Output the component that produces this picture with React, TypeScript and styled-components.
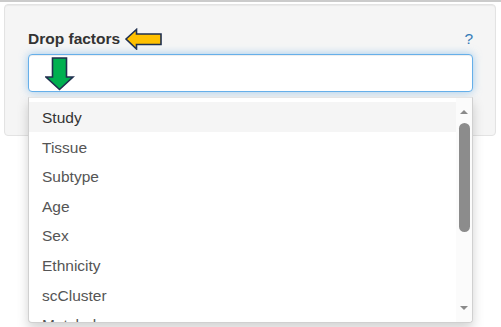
import React from "react";
import styled, { createGlobalStyle } from "styled-components";

const Global = createGlobalStyle`
  html, body { margin: 0; padding: 0; background: #fff; }
  body { font-family: "Liberation Sans", Arial, sans-serif; font-size: 15.5px; color: #333; }
  * { box-sizing: border-box; }
`;

const Page = styled.div`
  width: 501px;
  height: 327px;
  overflow: hidden;
  border-top: 2px solid #cbcbcb;
  padding: 2px 5px 0 4px;
`;

const Well = styled.div`
  background: #f5f5f5;
  border: 1px solid #e3e3e3;
  border-radius: 4px;
  box-shadow: inset 0 1px 1px rgba(0, 0, 0, 0.05);
  padding: 24px 22px 23px 23px;
`;

const LabelRow = styled.div`
  display: flex;
  align-items: center;
  height: 20px;
  margin-bottom: 5px;
`;

const Label = styled.label`
  font-weight: bold;
  font-size: 15.5px;
  line-height: 20px;
  color: #333;
`;

const Help = styled.span`
  margin-left: auto;
  color: #337ab7;
  font-size: 15.5px;
  line-height: 20px;
`;

const FieldWrap = styled.div`
  position: relative;
  margin-bottom: 20px;
`;

const Control = styled.div`
  height: 38px;
  border: 1px solid #66afe9;
  border-radius: 4px;
  background: #fff;
  box-shadow: inset 0 1px 1px rgba(0, 0, 0, 0.075), 0 0 8px rgba(102, 175, 233, 0.6);
  display: flex;
  align-items: flex-start;
  padding: 2px 16px;
`;

const Dropdown = styled.div`
  position: absolute;
  top: 43px;
  left: 0;
  right: 0;
  height: 226px;
  background: #fff;
  border: 1px solid #d0d0d0;
  border-top-color: #e5e5e5;
  border-radius: 0 0 4px 4px;
  box-shadow: 0 6px 12px rgba(0, 0, 0, 0.175);
  display: flex;
  overflow: hidden;
  z-index: 10;
`;

const Options = styled.div`
  flex: 1;
  padding-top: 4px;
  overflow: hidden;
`;

const Option = styled.div<{ $active?: boolean }>`
  height: 29.6px;
  line-height: 31px;
  padding: 0 13px;
  font-size: 15.5px;
  color: ${(p) => (p.$active ? "#333" : "#555")};
  background: ${(p) => (p.$active ? "#f5f5f5" : "transparent")};
  white-space: nowrap;
`;

const ScrollBar = styled.div`
  width: 16px;
  background: #fbfbfb;
  display: flex;
  flex-direction: column;
  align-items: center;
  padding-top: 12px;
`;

const Thumb = styled.div`
  width: 11px;
  height: 109px;
  margin-top: 9px;
  border-radius: 6px;
  background: #8c8c8c;
`;

const Spacer = styled.div`
  flex: 1;
`;

const Tri = styled.div<{ $down?: boolean }>`
  width: 0;
  height: 0;
  border-left: 4px solid transparent;
  border-right: 4px solid transparent;
  ${(p) => (p.$down ? "border-top: 4px solid #8a8a8a;" : "border-bottom: 4px solid #8a8a8a;")}
  margin-bottom: ${(p) => (p.$down ? "12px" : "0")};
`;

const ArrowSvg = styled.svg`
  display: block;
  flex: none;
`;

const LeftArrow = () => (
  <ArrowSvg width="40" height="22" viewBox="0 0 40 22" style={{ marginLeft: 4 }}>
    <polygon
      points="2,11 12.5,1.5 12.5,6 37,6 37,16.5 12.5,16.5 12.5,21"
      fill="#ffc000"
      stroke="#1f2f4f"
      strokeWidth="1.6"
      strokeLinejoin="miter"
    />
  </ArrowSvg>
);

const DownArrow = () => (
  <ArrowSvg width="30" height="34" viewBox="0 0 30 34">
    <polygon
      points="7.5,1 21.5,1 21.5,20 28,20 14.5,32.5 1,20 7.5,20"
      fill="#00b050"
      stroke="#1f2f4f"
      strokeWidth="1.6"
      strokeLinejoin="miter"
    />
  </ArrowSvg>
);

const options = ["Study", "Tissue", "Subtype", "Age", "Sex", "Ethnicity", "scCluster", "Match_key"];

export default function App() {
  return (
    <Page>
      <Global />
      <Well>
        <LabelRow>
          <Label>Drop factors</Label>
          <LeftArrow />
          <Help>?</Help>
        </LabelRow>
        <FieldWrap>
          <Control>
            <DownArrow />
          </Control>
          <Dropdown>
            <Options>
              {options.map((o, i) => (
                <Option key={o} $active={i === 0}>
                  {o}
                </Option>
              ))}
            </Options>
            <ScrollBar>
              <Tri />
              <Thumb />
              <Spacer />
              <Tri $down />
            </ScrollBar>
          </Dropdown>
        </FieldWrap>
      </Well>
    </Page>
  );
}
